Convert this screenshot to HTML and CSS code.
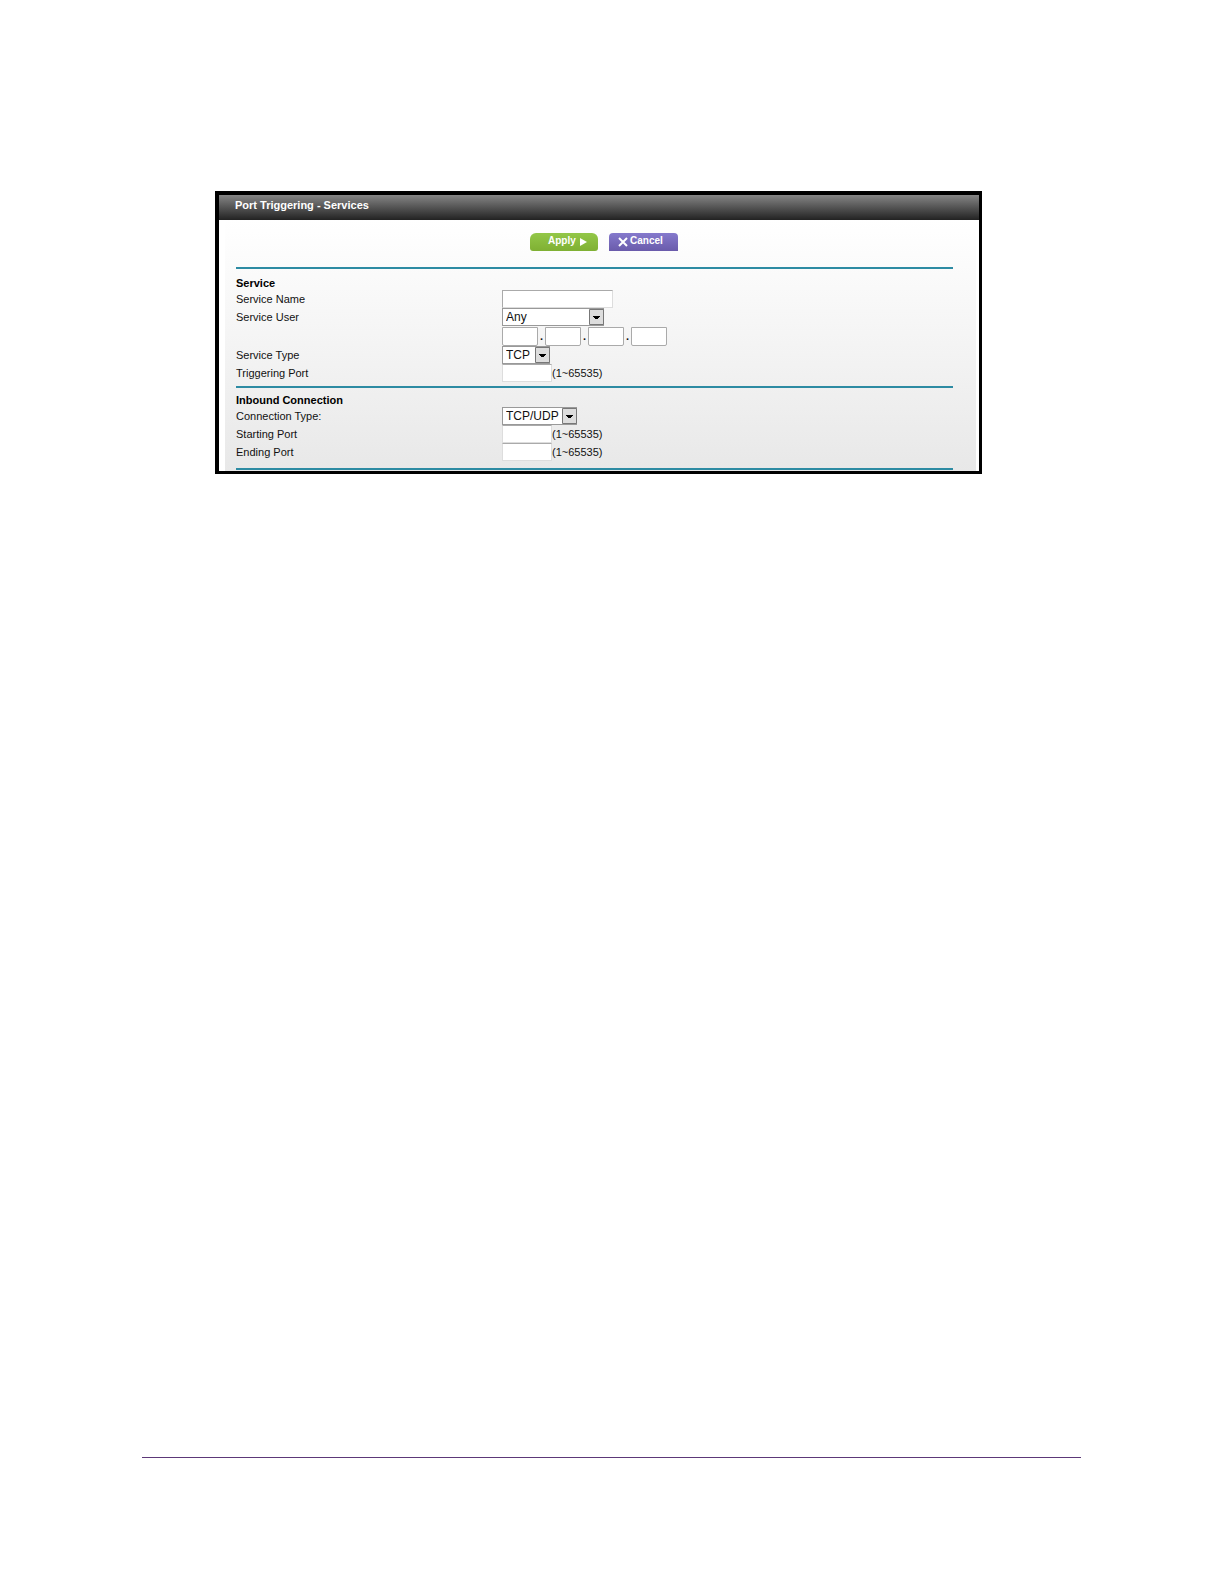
FILE: index.html
```html
<!DOCTYPE html>
<html lang="en">
<head>
<meta charset="utf-8">
<title>Port Triggering - Services</title>
<link rel="stylesheet" href="styles.css">
</head>
<body>
<main class="main">
  <form class="panel">
    <h1 class="title">Port Triggering - Services</h1>
    <div class="content">
      <div class="actions">
        <button class="btn apply" type="submit">Apply
          <svg width="7" height="8" viewBox="0 0 7 8" aria-hidden="true"><path d="M0 0 7 4 0 8Z" fill="#fff"/></svg>
        </button>
        <button class="btn cancel" type="button">
          <svg width="10" height="10" viewBox="0 0 10 10" aria-hidden="true"><path d="M1 1 9 9M9 1 1 9" fill="none" stroke="#fff" stroke-width="2"/></svg>
          Cancel
        </button>
      </div>

      <section class="group">
        <h2 class="heading">Service</h2>
        <div class="row">
          <label for="name">Service Name</label>
          <input class="box wide" id="name" type="text">
        </div>
        <div class="row">
          <label for="user">Service User</label>
          <span class="drop any">
            <select id="user"><option>Any</option></select>
            <svg class="arrow" viewBox="0 0 15 16" aria-hidden="true"><path d="M.5.5h14v15H.5z" fill="#ddd" stroke="#777"/><path d="M4 7h7v1h-1v1H9v1H6V9H5V8H4z" fill="#000"/></svg>
          </span>
        </div>
        <div class="row address">
          <span class="octets">
            <input class="box" type="text" aria-label="Address part 1"><b>.</b>
            <input class="box" type="text" aria-label="Address part 2"><b>.</b>
            <input class="box" type="text" aria-label="Address part 3"><b>.</b>
            <input class="box" type="text" aria-label="Address part 4">
          </span>
        </div>
        <div class="row">
          <label for="type">Service Type</label>
          <span class="drop tcp">
            <select id="type"><option>TCP</option></select>
            <svg class="arrow" viewBox="0 0 15 16" aria-hidden="true"><path d="M.5.5h14v15H.5z" fill="#ddd" stroke="#777"/><path d="M4 7h7v1h-1v1H9v1H6V9H5V8H4z" fill="#000"/></svg>
          </span>
        </div>
        <div class="row">
          <label for="trigger">Triggering Port</label>
          <span class="port"><input class="box" id="trigger" type="text">(1~65535)</span>
        </div>
      </section>

      <section class="group inbound">
        <h2 class="heading">Inbound Connection</h2>
        <div class="row">
          <label for="conn">Connection Type:</label>
          <span class="drop both">
            <select id="conn"><option>TCP/UDP</option></select>
            <svg class="arrow" viewBox="0 0 15 16" aria-hidden="true"><path d="M.5.5h14v15H.5z" fill="#ddd" stroke="#777"/><path d="M4 7h7v1h-1v1H9v1H6V9H5V8H4z" fill="#000"/></svg>
          </span>
        </div>
        <div class="row">
          <label for="start">Starting Port</label>
          <span class="port"><input class="box" id="start" type="text">(1~65535)</span>
        </div>
        <div class="row">
          <label for="end">Ending Port</label>
          <span class="port"><input class="box" id="end" type="text">(1~65535)</span>
        </div>
      </section>
    </div>
  </form>
</main>
<footer class="footer"></footer>
</body>
</html>
```
FILE: styles.css
```css
* {
  box-sizing: border-box;
}

body {
  margin: 0;
  min-height: 100vh;
  display: flex;
  flex-direction: column;
  background: #fff;
  color: #111;
  font: 11px/14px "Liberation Sans", Arial, sans-serif;
}

.main {
  flex: 1;
  padding: 191px 242px 40px 215px;
}

.panel {
  border: solid #000;
  border-width: 4px 3px 3px 4px;
}

.title {
  margin: 0;
  height: 25px;
  padding: 3px 16px;
  background: linear-gradient(#858585, #222);
  color: #fff;
  font-size: 11px;
  line-height: 14px;
}

.content {
  margin: 0 3px 0 6px;
  padding: 13px 23px 1px 11px;
  background: linear-gradient(#fff, #f5f5f5 45%, #e8e8e8);
}

.actions {
  display: flex;
  justify-content: center;
  gap: 11px;
  padding: 0 0 16px 19px;
}

.btn {
  display: flex;
  align-items: center;
  height: 18px;
  padding: 0 0 2px;
  border: 0;
  color: #fff;
  font: bold 10px/12px "Liberation Sans", Arial, sans-serif;
}

.btn svg {
  position: relative;
  top: 1px;
}

.apply {
  width: 68px;
  gap: 4px;
  padding-left: 18px;
  border-radius: 6px 6px 3px 3px;
  background: linear-gradient(#93c748, #7fb033);
}

.cancel {
  width: 69px;
  gap: 2px;
  padding-left: 9px;
  border-radius: 4px 4px 0 0;
  background: linear-gradient(#8579cc, #6a5bab);
}

.group {
  padding: 7px 0 4px;
  border-top: 2px solid #2d8ba3;
}

.inbound {
  padding: 5px 0 7px;
  border-bottom: 2px solid #2d8ba3;
}

.heading {
  margin: 0;
  font-size: 11px;
  line-height: 14px;
  color: #000;
}

.row {
  display: grid;
  grid-template-columns: 266px 1fr;
  align-items: center;
  height: 18px;
}

.address {
  height: 20px;
}

.box {
  width: 50px;
  height: 18px;
  padding: 1px 3px;
  border: 1px solid #ddd;
  border-top-color: #aaa;
  background: #fff;
  font: inherit;
}

.wide {
  width: 111px;
  border-left-color: #aaa;
}

.port {
  display: flex;
  align-items: center;
}

.octets {
  grid-column: 2;
  display: flex;
  align-items: center;
}

.octets .box {
  width: 36px;
  height: 19px;
  border-color: #aaa;
  border-radius: 0 0 2px 2px;
}

.octets b {
  width: 7px;
  text-align: center;
}

.drop {
  position: relative;
  height: 18px;
}

.drop select {
  display: block;
  width: 100%;
  height: 100%;
  padding: 0 0 0 3px;
  border: 1px solid #999;
  border-radius: 0;
  appearance: none;
  background: #fff;
  color: #111;
  font: 12px/14px "Liberation Sans", Arial, sans-serif;
}

.arrow {
  position: absolute;
  top: 1px;
  right: 0;
  width: 15px;
  height: 16px;
  pointer-events: none;
}

.any {
  width: 102px;
}

.tcp {
  width: 48px;
}

.both {
  width: 75px;
}

.footer {
  margin: 0 143px 126px 142px;
  border-top: 1px solid #5c3878;
}
```
